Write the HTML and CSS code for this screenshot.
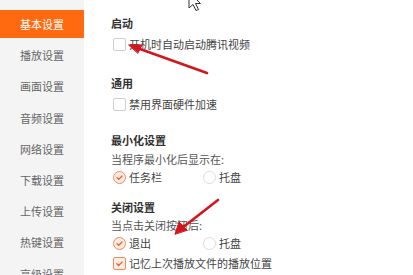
FILE: index.html
```html
<!DOCTYPE html>
<html lang="zh-CN">
<head>
<meta charset="utf-8">
<title>基本设置</title>
<link rel="stylesheet" href="styles.css">
</head>
<body>
<div class="app">
  <nav class="side">
    <div class="nav-item active">基本设置</div>
    <div class="nav-item">播放设置</div>
    <div class="nav-item">画面设置</div>
    <div class="nav-item">音频设置</div>
    <div class="nav-item">网络设置</div>
    <div class="nav-item">下载设置</div>
    <div class="nav-item">上传设置</div>
    <div class="nav-item">热键设置</div>
    <div class="nav-item">高级设置</div>
  </nav>
  <main class="content">
    <div class="title t1">启动</div>
    <label class="row r-gap3"><span class="box"></span>开机时自动启动腾讯视频</label>

    <div class="title t2">通用</div>
    <label class="row r-gap3"><span class="box"></span>禁用界面硬件加速</label>

    <div class="title t3">最小化设置</div>
    <div class="desc d1">当程序最小化后显示在:</div>
    <div class="radios">
      <label class="opt"><span class="radio on"><svg viewBox="0 0 12 12"><path d="M3.3 6.2 L5.2 8 L8.8 4.3"/></svg></span>任务栏</label>
      <label class="opt"><span class="radio"></span>托盘</label>
    </div>

    <div class="title t4">关闭设置</div>
    <div class="desc">当点击关闭按钮后:</div>
    <div class="radios">
      <label class="opt"><span class="radio on"><svg viewBox="0 0 12 12"><path d="M3.3 6.2 L5.2 8 L8.8 4.3"/></svg></span>退出</label>
      <label class="opt"><span class="radio"></span>托盘</label>
    </div>
    <label class="row r-gap2"><span class="box on"><svg viewBox="0 0 12 12"><path d="M3 6.2 L5.1 8.2 L9 4.2"/></svg></span>记忆上次播放文件的播放位置</label>
  </main>
</div>
<svg class="marks" width="413" height="275" viewBox="0 0 413 275">
  <g stroke="#d3161d" stroke-width="2.6" stroke-linecap="round" fill="#d3161d">
    <line x1="207" y1="73" x2="140" y2="49"/>
    <polygon points="129,45 142,45 138,53" stroke-width="1"/>
    <line x1="218" y1="200" x2="182" y2="228"/>
    <polygon points="175,234 179,222 187,230" stroke-width="1"/>
  </g>
  <path class="cursor" d="M0 0 L0 16 L4 12.5 L7 18.5 L9.5 17.5 L6.5 11.5 L11.5 11.5 Z" transform="translate(189,-8)"/>
</svg>
</body>
</html>
```

FILE: styles.css
```css
html, body {
  margin: 0;
  padding: 0;
  background: #ffffff;
}
body {
  width: 413px;
  height: 275px;
  overflow: hidden;
  position: relative;
  font-family: "Noto Sans CJK SC", "Noto Sans", sans-serif;
  font-size: 11px;
  color: #444;
}
.app {
  display: flex;
  height: 275px;
}
.side {
  width: 84px;
  flex: none;
  background: #f4f4f4;
  padding-top: 10px;
  box-sizing: border-box;
  display: flex;
  flex-direction: column;
  gap: 3.2px;
}
.nav-item {
  height: 28px;
  line-height: 28px;
  text-align: center;
  color: #666;
  font-size: 11px;
  flex: none;
}
.nav-item.active {
  background: #ff6a10;
  color: #fff;
}
.content {
  flex: 1;
  padding-left: 27px;
  padding-top: 14px;
  display: flex;
  flex-direction: column;
  align-items: flex-start;
}
.title {
  font-weight: bold;
  color: #333;
  font-size: 11px;
  line-height: 18px;
  height: 18px;
}
.t2 { margin-top: 21px; }
.t3 { margin-top: 18px; }
.t4 { margin-top: 12px; }
.desc {
  line-height: 18px;
  height: 18px;
  color: #555;
}
.d1 { margin-top: 1px; }
.row {
  display: flex;
  align-items: center;
  height: 18px;
  gap: 3px;
  margin-left: 2px;
  color: #444;
}
.r-gap3 { margin-top: 3px; }
.r-gap2 { margin-top: 2px; }
.radios {
  display: flex;
  height: 18px;
  margin-left: 2px;
}
.opt {
  display: flex;
  align-items: center;
  gap: 3px;
  width: 90px;
}
.box, .radio {
  width: 13px;
  height: 13px;
  box-sizing: border-box;
  border: 1px solid #cfcfcf;
  background: #fff;
  display: flex;
  flex: none;
}
.box { border-radius: 2px; }
.radio { border-radius: 50%; border-color: #dcdcdc; }
.box.on, .radio.on {
  border-color: #ef8a5a;
  background: #fdece3;
}
.box svg, .radio svg {
  width: 11px;
  height: 11px;
  fill: none;
  stroke: #e9602a;
  stroke-width: 1.4;
  stroke-linecap: round;
  stroke-linejoin: round;
}
.marks {
  position: absolute;
  left: 0;
  top: 0;
  pointer-events: none;
}
.cursor {
  fill: #ffffff;
  stroke: #333;
  stroke-width: 1;
}
```
